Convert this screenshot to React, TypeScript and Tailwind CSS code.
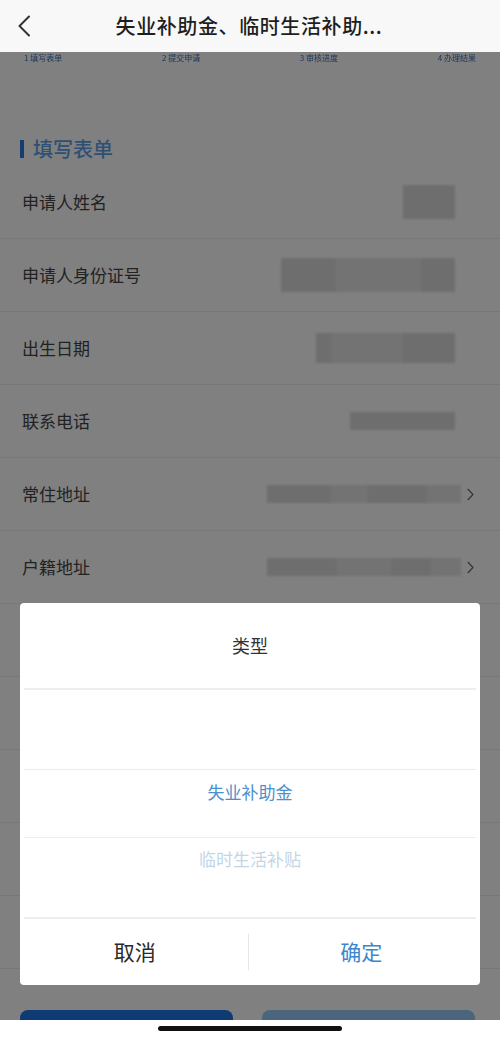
import React from 'react';

interface FormRow {
  label: string;
  cells: number[];
  h: number;
  arrow?: boolean;
}

const rows: FormRow[] = [
  { label: '申请人姓名', cells: [52], h: 34 },
  { label: '申请人身份证号', cells: [55, 85, 34], h: 34 },
  { label: '出生日期', cells: [16, 70, 53], h: 30 },
  { label: '联系电话', cells: [105], h: 18 },
  { label: '常住地址', cells: [64, 36, 60, 34], h: 18, arrow: true },
  { label: '户籍地址', cells: [70, 54, 40, 30], h: 18, arrow: true },
  { label: '就业状态', cells: [80], h: 18 },
  { label: '失业时间', cells: [90], h: 18 },
  { label: '开户银行', cells: [120], h: 18 },
  { label: '银行账号', cells: [140], h: 18 },
  { label: '申请类型', cells: [100], h: 18 },
];

const steps = ['1 填写表单', '2 提交申请', '3 审核进度', '4 办理结果'];

const Chevron: React.FC<{ className?: string }> = ({ className }) => (
  <svg viewBox="0 0 10 18" className={className} fill="none" stroke="currentColor" strokeWidth={1.6}>
    <polyline points="1.5,1.5 8.5,9 1.5,16.5" strokeLinecap="round" strokeLinejoin="round" />
  </svg>
);

const App: React.FC = () => {
  return (
    <div className="w-[500px] h-[1040px] flex flex-col bg-white overflow-hidden font-['Noto_Sans_CJK_SC','Noto_Sans',sans-serif]">
      {/* nav bar */}
      <div className="relative z-20 h-[52px] shrink-0 flex items-center bg-[#f8f8f8]">
        <div className="w-[52px] flex justify-center">
          <svg viewBox="0 0 14 22" className="w-[14px] h-[22px] text-[#333] -ml-[4px]" fill="none" stroke="currentColor" strokeWidth={2}>
            <polyline points="12,1.5 2.5,11 12,20.5" strokeLinecap="round" strokeLinejoin="round" />
          </svg>
        </div>
        <div className="flex-1 text-center text-[20px] font-medium text-[#1e1e1e] tracking-[0.6px] -ml-[2px] mr-[52px]">
          失业补助金、临时生活补助...
        </div>
      </div>

      {/* page body with mask */}
      <div className="relative flex-1 flex flex-col bg-[#fbfbfb] overflow-hidden">
        <div className="flex-1 overflow-hidden">
          <div className="h-[12px] flex items-center px-[24px] justify-between blur-[0.6px]">
            {steps.map((s) => (
              <span key={s} className="text-[8px] leading-[10px] text-[#3c6fb0] whitespace-nowrap">
                {s}
              </span>
            ))}
          </div>
          <div className="h-[102px] flex items-end pb-[2px] pl-[20px]">
            <div className="flex items-center gap-[9px]">
              <div className="w-[4px] h-[18px] bg-[#2a78d6]" />
              <span className="text-[20px] font-medium text-[#5a9ee6]">填写表单</span>
            </div>
          </div>
          {rows.map((r) => (
            <div key={r.label} className="h-[73px] flex items-center justify-between border-b border-[#ececec] pl-[22px] pr-[26px]">
              <span className="text-[17px] text-[#444]">{r.label}</span>
              <div className="flex items-center gap-[6px]">
                <div className="flex blur-[1.2px]">
                  {r.cells.map((w, i) => (
                    <div
                      key={i}
                      className={i % 2 === 0 ? 'bg-[#d8d8d8]' : 'bg-[#e2e2e2]'}
                      style={{ width: w, height: r.h }}
                    />
                  ))}
                </div>
                {r.arrow ? (
                  <Chevron className="w-[7px] h-[13px] text-[#666]" />
                ) : (
                  <div className="w-[13px]" />
                )}
              </div>
            </div>
          ))}
        </div>
        <div className="h-[10px] shrink-0 flex items-start px-[20px] gap-[29px] overflow-hidden">
          <div className="w-[213px] h-[40px] rounded-t-[8px] bg-[#1e74e6]" />
          <div className="w-[213px] h-[40px] rounded-t-[8px] bg-[#94c8f4]" />
        </div>

        {/* mask */}
        <div className="absolute inset-0 bg-black/[0.49]" />

        {/* picker dialog */}
        <div className="absolute left-[20px] top-[551px] w-[460px] h-[382px] bg-white rounded-[4px] flex flex-col">
          <div className="h-[87px] flex items-center justify-center text-[18px] text-[#333] border-b-2 border-[#eeeeee] mx-[4px]">
            类型
          </div>
          <div className="relative h-[229px] overflow-hidden">
            <div className="pt-[68px]">
              <div className="h-[67px] flex items-center justify-center text-[17px] text-[#4b90cc]">失业补助金</div>
              <div className="h-[67px] flex items-center justify-center text-[17px] text-[#c3d6e8]">临时生活补贴</div>
            </div>
            <div className="absolute left-[4px] right-[4px] top-[79px] h-[1px] bg-[#ececec]" />
            <div className="absolute left-[4px] right-[4px] top-[147px] h-[1px] bg-[#ececec]" />
            <div className="absolute left-[4px] right-[4px] bottom-0 h-[2px] bg-[#eeeeee]" />
          </div>
          <div className="flex-1 flex items-center">
            <div className="flex-1 text-center text-[21px] text-[#2a2a2a] pl-[2px]">取消</div>
            <div className="w-[1px] h-[36px] bg-[#e6e6e6]" />
            <div className="flex-1 text-center text-[21px] text-[#3b87cf] pr-[6px]">确定</div>
          </div>
        </div>
      </div>

      {/* home indicator */}
      <div className="h-[20px] shrink-0 bg-white flex justify-center pt-[6px]">
        <div className="w-[184px] h-[5px] rounded-full bg-[#111]" />
      </div>
    </div>
  );
};

export default App;
